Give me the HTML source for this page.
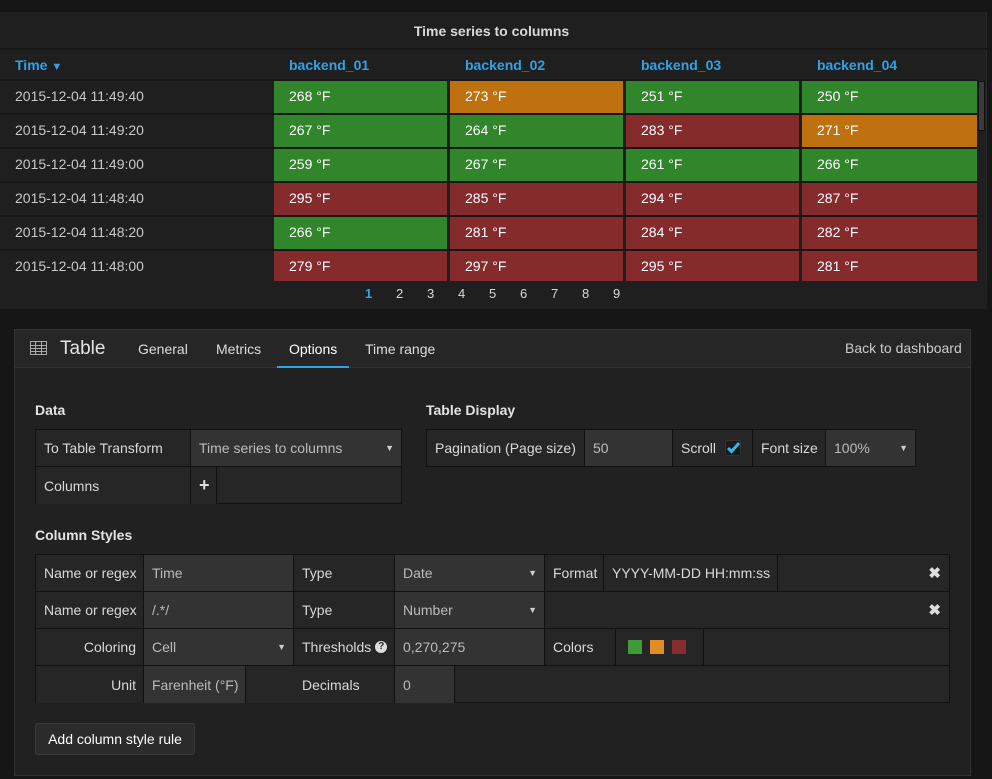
<!DOCTYPE html>
<html><head><meta charset="utf-8"><style>
*{box-sizing:border-box;margin:0;padding:0}
body{width:992px;height:779px;background:#161616;font-family:"Liberation Sans",sans-serif;font-size:14px;color:#d8d9da;position:relative;overflow:hidden}
.a{position:absolute}
.row{position:absolute;left:0;width:977px;height:32px;background:#1f1f1f}
.t{position:absolute;left:15px;top:7px;color:#c8c8c8}
.c{position:absolute;top:0;height:32px;padding:7px 0 0 15px;color:#fff}
.g{background:#31862c}.o{background:#bf7110}.r{background:#862b2c}
.hd{position:absolute;top:57px;color:#33a2e5;font-weight:bold}
.pg{position:absolute;top:286px;color:#d8d9da;font-size:13px}
.cell{position:absolute;height:100%;border-right:1px solid #111;padding-left:8px;display:flex;align-items:center;color:#d8d9da}
.lb{background:#262626}
.in{background:#333;color:#bbb}
.box{position:absolute;border:1px solid #111;background:#262626}
.rw{position:absolute;left:0;right:0;height:37px;border-bottom:1px solid #111}
.arr{position:absolute;right:7px;font-size:9px;color:#ccc}
.h{font-weight:bold;color:#e3e3e3;position:absolute}
.x{position:absolute;right:8px;font-weight:bold;color:#ddd;font-size:15px}
</style></head><body>
<div class="a" style="left:0;top:12px;width:987px;height:297px;background:#1f1f1f;border-right:1px solid #2a2a2a"></div>
<div class="a" style="left:-2px;top:23px;width:987px;text-align:center;font-weight:bold;color:#d8d9da">Time series to columns</div>
<div class="a" style="left:0;top:48px;width:987px;height:2px;background:#161616"></div>
<div class="hd" style="left:15px">Time <span style="font-size:11px">&#9660;</span></div>
<div class="hd" style="left:289px">backend_01</div>
<div class="hd" style="left:465px">backend_02</div>
<div class="hd" style="left:641px">backend_03</div>
<div class="hd" style="left:817px">backend_04</div>
<div class="a" style="left:0;top:79px;width:977px;height:2px;background:#161616"></div>
<div class="a" style="left:0;top:81px;width:977px;height:200px;background:#161616"></div>

<div class="row" style="top:81px"><div class="t">2015-12-04 11:49:40</div><div class="c g" style="left:274px;width:173px">268 °F</div><div class="c o" style="left:450px;width:173px">273 °F</div><div class="c g" style="left:626px;width:173px">251 °F</div><div class="c g" style="left:802px;width:175px">250 °F</div></div>
<div class="row" style="top:115px"><div class="t">2015-12-04 11:49:20</div><div class="c g" style="left:274px;width:173px">267 °F</div><div class="c g" style="left:450px;width:173px">264 °F</div><div class="c r" style="left:626px;width:173px">283 °F</div><div class="c o" style="left:802px;width:175px">271 °F</div></div>
<div class="row" style="top:149px"><div class="t">2015-12-04 11:49:00</div><div class="c g" style="left:274px;width:173px">259 °F</div><div class="c g" style="left:450px;width:173px">267 °F</div><div class="c g" style="left:626px;width:173px">261 °F</div><div class="c g" style="left:802px;width:175px">266 °F</div></div>
<div class="row" style="top:183px"><div class="t">2015-12-04 11:48:40</div><div class="c r" style="left:274px;width:173px">295 °F</div><div class="c r" style="left:450px;width:173px">285 °F</div><div class="c r" style="left:626px;width:173px">294 °F</div><div class="c r" style="left:802px;width:175px">287 °F</div></div>
<div class="row" style="top:217px"><div class="t">2015-12-04 11:48:20</div><div class="c g" style="left:274px;width:173px">266 °F</div><div class="c r" style="left:450px;width:173px">281 °F</div><div class="c r" style="left:626px;width:173px">284 °F</div><div class="c r" style="left:802px;width:175px">282 °F</div></div>
<div class="row" style="top:251px;height:30px"><div class="t">2015-12-04 11:48:00</div><div class="c r" style="left:274px;width:173px;height:30px">279 °F</div><div class="c r" style="left:450px;width:173px;height:30px">297 °F</div><div class="c r" style="left:626px;width:173px;height:30px">295 °F</div><div class="c r" style="left:802px;width:175px;height:30px">281 °F</div></div>
<div class="a" style="left:0;top:281px;width:987px;height:28px;background:#1f1f1f"></div>
<div class="a" style="left:978px;top:81px;width:7px;height:50px;background:#3a3a3a;border:1px solid #111"></div>
<div class="pg" style="left:365px;color:#33a2e5;font-weight:bold">1</div>
<div class="pg" style="left:396px">2</div><div class="pg" style="left:427px">3</div><div class="pg" style="left:458px">4</div><div class="pg" style="left:489px">5</div><div class="pg" style="left:520px">6</div><div class="pg" style="left:551px">7</div><div class="pg" style="left:582px">8</div><div class="pg" style="left:613px">9</div>

<div class="a" style="left:14px;top:329px;width:957px;height:447px;background:#212121;border:1px solid #333"></div>
<div class="a" style="left:15px;top:330px;width:955px;height:38px;background:#262626;border-bottom:1px solid #333"></div>
<svg class="a" style="left:30px;top:341px" width="17" height="14" viewBox="0 0 17 14"><rect x="0.5" y="0.5" width="16" height="13" fill="none" stroke="#aaa"/><path d="M0 4.5H17M0 7.5H17M0 10.5H17M5.5 0V14M11.5 0V14" stroke="#aaa"/></svg>
<div class="a" style="left:60px;top:338px;font-size:19px;color:#e3e3e3">Table</div>
<div class="a" style="left:138px;top:341px;color:#ddd">General</div>
<div class="a" style="left:216px;top:341px;color:#ddd">Metrics</div>
<div class="a" style="left:289px;top:341px;color:#fff">Options</div>
<div class="a" style="left:277px;top:366px;width:72px;height:2px;background:#33a2e5"></div>
<div class="a" style="left:365px;top:341px;color:#ddd">Time range</div>
<div class="a" style="left:845px;top:340px;color:#ccc">Back to dashboard</div>

<div class="h" style="left:35px;top:402px">Data</div>
<div class="box" style="left:35px;top:429px;width:367px;height:75px">
 <div class="rw" style="top:0"><div class="cell lb" style="left:0;width:155px">To Table Transform</div><div class="cell in" style="left:155px;width:210px;border-right:none">Time series to columns<span class="arr">&#9660;</span></div></div>
 <div class="rw" style="top:37px;border:none"><div class="cell lb" style="left:0;width:155px">Columns</div><div class="cell lb" style="left:155px;width:26px;font-weight:bold;font-size:18px;color:#ddd">+</div></div>
</div>

<div class="h" style="left:426px;top:402px">Table Display</div>
<div class="box" style="left:426px;top:429px;width:490px;height:38px">
 <div class="cell lb" style="left:0;width:158px">Pagination (Page size)</div>
 <div class="cell in" style="left:158px;width:88px">50</div>
 <div class="cell lb" style="left:246px;width:80px">Scroll
  <svg style="margin-left:9px" width="16" height="16" viewBox="0 0 16 16"><rect x="0.5" y="0.5" width="15" height="15" rx="2" fill="#1a1a1a" stroke="#333"/><path d="M3 8L6.5 11.5L14 3" stroke="#33b5e5" stroke-width="3" fill="none"/></svg></div>
 <div class="cell lb" style="left:326px;width:73px">Font size</div>
 <div class="cell in" style="left:399px;width:89px;border-right:none">100%<span class="arr">&#9660;</span></div>
</div>

<div class="h" style="left:35px;top:527px">Column Styles</div>
<div class="box" style="left:35px;top:554px;width:915px;height:149px">
 <div class="rw" style="top:0"><div class="cell lb" style="left:0;width:108px">Name or regex</div><div class="cell in" style="left:108px;width:150px">Time</div><div class="cell lb" style="left:258px;width:101px">Type</div><div class="cell in" style="left:359px;width:150px">Date<span class="arr">&#9660;</span></div><div class="cell lb" style="left:509px;width:59px">Format</div><div class="cell lb" style="left:568px;width:174px">YYYY-MM-DD HH:mm:ss</div><span class="x" style="top:9px">&#10006;</span></div>
 <div class="rw" style="top:37px"><div class="cell lb" style="left:0;width:108px">Name or regex</div><div class="cell in" style="left:108px;width:150px">/.*/</div><div class="cell lb" style="left:258px;width:101px">Type</div><div class="cell in" style="left:359px;width:150px">Number<span class="arr">&#9660;</span></div><span class="x" style="top:9px">&#10006;</span></div>
 <div class="rw" style="top:74px"><div class="cell lb" style="left:0;width:108px;justify-content:flex-end;padding-right:7px">Coloring</div><div class="cell in" style="left:108px;width:150px">Cell<span class="arr">&#9660;</span></div><div class="cell lb" style="left:258px;width:101px">Thresholds <span style="display:inline-block;width:12px;height:12px;border-radius:6px;background:#ddd;color:#262626;font-size:10px;font-weight:bold;text-align:center;line-height:12px;margin-left:4px">?</span></div><div class="cell in" style="left:359px;width:150px">0,270,275</div><div class="cell lb" style="left:509px;width:71px">Colors</div><div class="cell lb" style="left:580px;width:88px;padding-left:12px"><span style="width:14px;height:14px;background:#3f9a3a;margin-right:8px"></span><span style="width:14px;height:14px;background:#e08e24;margin-right:8px"></span><span style="width:14px;height:14px;background:#882d2d"></span></div></div>
 <div class="rw" style="top:111px;border:none"><div class="cell lb" style="left:0;width:108px;justify-content:flex-end;padding-right:7px">Unit</div><div class="cell in" style="left:108px;width:102px">Farenheit (°F)</div><div class="cell lb" style="left:210px;width:149px;padding-left:56px">Decimals</div><div class="cell in" style="left:359px;width:60px">0</div></div>
</div>

<div class="a" style="left:35px;top:723px;width:160px;height:32px;background:#2b2b2b;border:1px solid #3a3a3a;border-radius:3px;color:#fff;text-align:center;line-height:30px">Add column style rule</div>
</body></html>
